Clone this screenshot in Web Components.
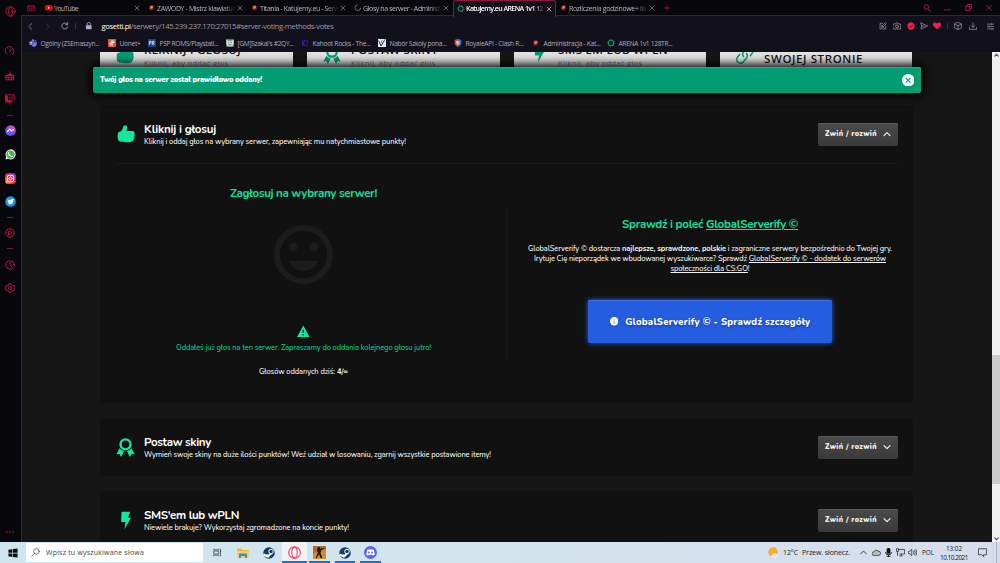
<!DOCTYPE html>
<html lang="pl"><head><meta charset="utf-8"><title>Katujemy.eu ARENA 1v1</title>
<style>html,body{margin:0;height:100%;overflow:hidden;background:#161616}</style></head>
<body><desk-screen></desk-screen>
<script>
const UI='"Open Sans","Noto Sans",sans-serif', PG='"Nunito","Lato","Open Sans",sans-serif';
const def=(n,html,extra)=>customElements.define(n,class extends HTMLElement{
  connectedCallback(){ if(this.shadowRoot)return; this.attachShadow({mode:'open'});
    this.shadowRoot.innerHTML=typeof html==='function'?html(this):html; if(extra)extra(this);} });

const S='fill="none" stroke="currentColor" stroke-linecap="round" stroke-linejoin="round" stroke-width=';
const ember='<circle cx="12" cy="12" r="9" fill="#4a1613"/><path d="M6 7q6-5 11 1l-2 7-7 3-3-4z" fill="#c9503a"/><path d="M9 9l5-1 1 3-4 2z" fill="#f0bfa6"/>';
const steam='<circle cx="12" cy="12" r="11.5" fill="#173a66"/><path d="M1 15l9 4 8-8" fill="none" stroke="#fff" stroke-width="4"/><circle cx="16" cy="9" r="4.5" fill="#173a66" stroke="#fff" stroke-width="2"/><circle cx="9" cy="17.5" r="3" fill="#fff"/>';
const I={
opera:`<circle cx="12" cy="12" r="10.3" ${S}"2"/><ellipse cx="12" cy="12" rx="4.6" ry="8.5" ${S}"2"/>`,
home:`<path d="M2 19V6l4-2 3 2h6l3-2 4 2v13zM2 9h20M8 14.5h.5M15.500 14.500h.5M7 14q5 4 10 0" ${S}"2"/>`,
yt:'<rect x="0" y="3" width="24" height="18" rx="5" fill="#f00"/><path d="M9.500 8v8l7-4z" fill="#fff"/>',
ember,steam,
ring:`<circle cx="12" cy="12" r="9" fill="none" stroke="#77757d" stroke-width="3" stroke-dasharray="42 15"/>`,
gear:`<circle cx="12" cy="12" r="8" fill="none" stroke="#0f9f77" stroke-width="3.2"/><circle cx="12" cy="12" r="10.500" fill="none" stroke="#0f9f77" stroke-width="2.500" stroke-dasharray="3 5.200"/>`,
x:`<path d="M4 4l16 16M20 4L4 20" ${S}"2.8"/>`,
plus:`<path d="M12 2v20M2 12h20" ${S}"2.6"/>`,
search:`<circle cx="10" cy="9" r="7" ${S}"2.6"/><path d="M15 15l7 7" ${S}"3"/>`,
find:`<circle cx="14.500" cy="9" r="7.300" ${S}"1.9"/><path d="M9 14.500L2 22" ${S}"1.9"/>`,
min:`<path d="M2 20h20" ${S}"2.8"/>`,
max:`<path d="M2 8h14v14H2zM7 8V2h15v15h-6" ${S}"2.8"/>`,
back:`<path d="M16 2L7 12l9 10" ${S}"2.8"/>`,fwd:`<path d="M8 2l9 10-9 10" ${S}"2.8"/>`,
reload:`<path d="M20 15a9 9 0 1 1-1-8M20 2v6h-6" ${S}"2.8"/>`,
lock:`<rect x="3" y="10" width="18" height="13" rx="2" fill="currentColor"/><path d="M7 10V6a5 5 0 0 1 10 0v4" ${S}"2.6"/>`,
edit:`<path d="M11 4H3v17h17v-8M8 16l2-5 9-9 3 3-9 9zM6 9l9 9" ${S}"2"/>`,
cam:`<path d="M1 6h6l2-3h6l2 3h6v15H1z" ${S}"2.200"/><circle cx="12" cy="13" r="4.500" ${S}"2.200"/>`,
shield:'<path d="M12 0l3 2h4l1 4 3 3-1 6-3 6-7 3-7-3-3-6-1-6 3-3 1-4h4z" fill="#fa1e4e"/><path d="M7 12l4 4 7-8" fill="none" stroke="#12101a" stroke-width="2.600"/>',
send:`<path d="M3 3l20 9L3 21l2-9zM5 12h8" ${S}"2.2"/>`,
heart:'<path d="M12 22C5 16 0 13 0 7.500 0 1 9 0 12 5c3-5 12-4 12 2.500C24 13 19 16 12 22z" fill="#fa1e4e"/>',
cube:`<path d="M12 1l10 5v12l-10 5-10-5V6zM2 6l10 5 10-5M12 11v12" ${S}"2.2"/>`,
dl:`<path d="M12 2v13M7 11l5 5 5-5M1 16v6h22v-6" ${S}"2.200"/>`,
slid:`<path d="M1 4h22M1 12h22M1 20h22M15 2v4M7 10v4M17 18v4" ${S}"2.400"/>`,
teams:'<circle cx="12" cy="5" r="4" fill="#7b83eb"/><circle cx="19.500" cy="6" r="3" fill="#5059c9"/><path d="M7 10h16v7q-2 6-8 6-6 0-8-6z" fill="#7b83eb"/><rect y="7" width="13" height="12" rx="1" fill="#4550b5"/><path d="M3 10h7M6.500 10v7" stroke="#fff" stroke-width="2"/>',
uonet:'<rect width="24" height="24" fill="#e9572c"/><path d="M12 3v18M4 13l16-3M7 19l4-6M17 5l-5 7" stroke="#fff" stroke-width="3"/>',
psp:'<rect width="24" height="24" fill="#164585"/><path d="M4 18V7h5v5H4M13 18V7h5v5h-5M16 12l3 6" fill="none" stroke="#d8e8f8" stroke-width="2.400"/>',
gm:'<rect x="1" y="1" width="22" height="22" fill="#8f9a9c"/><path d="M1 1l6 6h10l6-6v13l-4 8H5l-4-8z" fill="#d6dddc"/><path d="M6 11h4M14 11h4M8 17h8" stroke="#5c6d70" stroke-width="2.500"/>',
kahoot:'<path d="M5 3v18M14 3l-8 9 8 9M19 3l-1 11M18 18v3" fill="none" stroke="#46178f" stroke-width="3.600"/>',
nabor:'<rect width="24" height="24" fill="#e6e9ee"/><path d="M2 5l7 16L21 1" fill="none" stroke="#26384e" stroke-width="3"/><path d="M12 4l-3 10" stroke="#5f8ab5" stroke-width="3"/>',
royale:'<path d="M2 3q10-4 10-2v23Q2 20 2 12z" fill="#e0443c"/><path d="M22 3q-10-4-10-2v23q10-4 10-12z" fill="#2c6be0"/><path d="M7 6h5v12q-5-3-5-6z" fill="#f0cdb4"/><path d="M12 6h5v6q0 4-5 6z" fill="#f5ab38"/>',
dash:`<path d="M5 20A10 10 0 1 1 16 3M19.500 7A10 10 0 0 1 19 20M11 14l7-8" ${S}"2.400"/>`,
broom:`<path d="M3 11h18v10H3zM3 15h18M12 11V2M7 8h10M8 17v2M16 17v2" ${S}"2.400"/>`,
twitch:`<path d="M2 2h20v13l-4 4h-4l-4 4v-4H2z" ${S}"2.200"/><path d="M2 4h5v11h11l-4 4H3z" fill="currentColor"/><path d="M12 7v4M17 7v4" ${S}"2.200"/>`,
msgr:'<defs><linearGradient id="m" x1="0" y1="1" x2="1" y2="0"><stop stop-color="#1f7cff"/><stop offset=".5" stop-color="#8a46f5"/><stop offset="1" stop-color="#ff6a73"/></linearGradient></defs><circle cx="12" cy="12" r="11.500" fill="url(#m)"/><path d="M5 15l5-6 4 4 5-4" fill="none" stroke="#fff" stroke-width="2.600"/>',
wa:'<path d="M1 23l1.500-6A11 11 0 1 1 7 21.500z" fill="#e9f5e9"/><circle cx="12" cy="12" r="9" fill="#40b754"/><path d="M8 7q-2 4 2 7t7 2" fill="none" stroke="#fff" stroke-width="2.800"/>',
ig:'<defs><linearGradient id="g" x1="0" y1="1" x2=".8" y2="0"><stop stop-color="#ffc851"/><stop offset=".4" stop-color="#f0493f"/><stop offset=".7" stop-color="#c9328d"/><stop offset="1" stop-color="#6b4bd4"/></linearGradient></defs><rect x=".5" y=".5" width="23" height="23" rx="5" fill="url(#g)"/><rect x="5" y="5" width="14" height="14" rx="4" fill="none" stroke="#fff" stroke-width="2"/><circle cx="12" cy="12" r="3.300" fill="none" stroke="#fff" stroke-width="2"/>',
tw:'<circle cx="12" cy="12" r="11.500" fill="#1c96e0"/><path d="M6 7q3 3 6 3 0-4 4-4l4 1-2 3q0 8-8 8l-5-1q3 0 4-2-3-1-3-3z" fill="#fff"/>',
play:`<circle cx="12" cy="12" r="10" ${S}"2.400"/><path d="M9 17V8h4a3.500 3.500 0 0 1 0 7H9" ${S}"2.400"/>`,
clock:`<circle cx="12" cy="12" r="10" ${S}"2.400"/><path d="M12 6v6l4 4" ${S}"2.400"/>`,
cog:`<path d="M9.500 2h5l1 3 3 1.500 3-.5L23 10l-2 2 2 2.500-2 4-3-.5-2.500 1.500-1 3h-5l-1-3L6 18l-3 .5-2-4L3 12l-2-2 1.500-4 3 .5 3-1.500z" ${S}"2.300"/><circle cx="12" cy="12" r="3.600" ${S}"2.400"/>`,
dots:'<circle cx="4" cy="12" r="2" fill="currentColor"/><circle cx="12" cy="12" r="2" fill="currentColor"/><circle cx="20" cy="12" r="2" fill="currentColor"/>',
thumb:'<path d="M1 12q0-3 4-3.500Q8 6 8.500 1.500 12-1.500 13.500 2.500q.6 2-1 5.500H21q3.500.5 2 4 1.500 2 0 4 .5 2-1 3 0 3-4 3.500-8 1-11-.5Q2 23 1 19z" fill="currentColor"/>',
award:`<circle cx="12" cy="8" r="6.300" fill="none" stroke="currentColor" stroke-width="3"/><path d="M4.500 13L.5 20.500l4-.4L6.500 24l3.800-7.500q-4-.8-5.800-3.500zM19.500 13l4 7.500-4-.4L17.500 24l-3.800-7.500q4-.8 5.800-3.500z" fill="currentColor"/>`,
bolt:'<path d="M7 1h11l-3 7.500h4L10.500 23.500 12 14H6.500z" fill="currentColor"/>',
link:`<path d="M10 14a5 5 0 0 1 0-6l4-5a4.500 4.500 0 0 1 8 6l-3 4M14 10a5 5 0 0 1 0 6l-4 5a4.500 4.500 0 0 1-8-6l3-4" ${S}"2"/>`,
smile:'<circle cx="12" cy="12" r="10.800" fill="none" stroke="currentColor" stroke-width="2.400"/><circle cx="7.800" cy="9" r="1.800" fill="currentColor"/><circle cx="16.200" cy="9" r="1.800" fill="currentColor"/><path d="M6 14.600h12q-1.800 4-6 4t-6-4z" fill="currentColor"/>',
warn:'<path d="M12 .8L24 23H0z" fill="currentColor"/><path d="M12 9v6M12 17.500v2.500" stroke="#111" stroke-width="2.400"/>',
info:'<circle cx="12" cy="12" r="12" fill="#fff"/><path d="M12 5.500v3M9.500 11H12v6.500M9 17.500h6" fill="none" stroke="#7d9dec" stroke-width="2.200"/>',
up:`<path d="M3 17l9-9 9 9" ${S}"3.600"/>`,down:`<path d="M3 8l9 9 9-9" ${S}"3.600"/>`,
up2:`<path d="M2 17l10-10 10 10" ${S}"2.800"/>`,
close:'<circle cx="12" cy="12" r="12" fill="#fff"/><path d="M7.500 7.500l9 9M16.500 7.500l-9 9" stroke="#029c73" stroke-width="2.200"/>',
win:'<path d="M1 4l9-1.300V11.500H1zM11.500 2.500L23 1v10.500H11.500zM1 13h9v8.500L1 20zM11.500 13H23v10l-11.500-1.600z" fill="#0b0f12"/>',
task:'<path d="M2 2v3h13V2M2 22v-3h13v3M2 8h13v8H2zM20 2v20M18.500 8h4" fill="none" stroke="#333e44" stroke-width="2"/>',
folder:'<path d="M0 3h9l2 3h13v15H0z" fill="#f1b43a"/><path d="M0 8h24v13H0z" fill="#fbd168"/><path d="M4 13h16v9h-4v-4H8v4H4z" fill="#2f8fdc"/>',
operac:'<circle cx="12" cy="12" r="10.700" fill="none" stroke="#ef3f64" stroke-width="2"/><ellipse cx="12" cy="12" rx="5" ry="9.500" fill="#fff" stroke="#ef3f64" stroke-width="2"/>',
cs:'<rect width="24" height="24" fill="#d18d2c"/><path d="M0 14l24-9V0H0z" fill="#b3711f"/><path d="M9 2h4v3l8-2v2l-6 3-1 5 3 9h-3l-3-7-4 7H5l4-10-2-4z" fill="#1c1c1a"/>',
discord:'<circle cx="12" cy="12" r="12" fill="#5865f2"/><path d="M6 7q6-2 12 0l2 9q-3 2-4 1l-1-1H9l-1 1q-1 1-4-1z" fill="#fff"/><circle cx="9" cy="12" r="1.700" fill="#5865f2"/><circle cx="15" cy="12" r="1.700" fill="#5865f2"/>',
wx:'<circle cx="11" cy="11" r="10.500" fill="#f8ac28"/><path d="M11 23a4 4 0 0 1 0-8q5-4 8 1a3.500 3.500 0 0 1 1 7z" fill="#e9edf2"/>',
cloud:'<path d="M5 20a5 5 0 0 1 0-10Q9 2 17 8q6 1 6 6t-5 6z" fill="#b5b9bd" stroke="#333" stroke-width="2"/>',
mic:'<rect x="7" y="0" width="10" height="15" rx="4" fill="#111"/><path d="M4 11q0 7 8 7t8-7M12 18v6M7 22h10" fill="none" stroke="#111" stroke-width="2.500"/>',
mon:'<path d="M6 4h17v12H9M14 16v5M9 21h9M1 2h6v7H1zM4 9v12" fill="none" stroke="#222" stroke-width="2"/>',
vol:'<path d="M1 9h4l5-6v18l-5-6H1zM14 8q3 4 0 8M17 5q5 7 0 14M20.500 3q6 9 0 18" fill="none" stroke="#222" stroke-width="1.800"/>',
note:'<path d="M1 2h22v16h-8v5l-5-5H1z" fill="none" stroke="#222" stroke-width="2"/>',
tri:'<path d="M5 15l7-7 7 7" fill="none" stroke="#555" stroke-width="4"/>',trid:'<path d="M5 9l7 7 7-7" fill="none" stroke="#555" stroke-width="4"/>'
};
def('x-icon',h=>`<style>:host{display:block;flex:none;width:${h.getAttribute('s')||9}px;height:${h.getAttribute('s')||9}px}svg{display:block;width:100%;height:100%}</style><svg viewBox="0 0 24 24">${I[h.getAttribute('n')]}</svg>`);

/* Text run spaced out to fill the width given in "w". */
def('fit-text','<style>:host{display:inline-block;white-space:nowrap;flex:none;justify-self:start}</style><slot></slot>',h=>{
  const w=+h.getAttribute('w'),n=h.textContent.length,m=h.getBoundingClientRect().width;
  if(m&&w){h.style.letterSpacing=((w-m)/n)+'px';}
});

def('browser-tab',h=>`<style>
:host{display:flex;align-items:center;box-sizing:border-box;width:103px;height:16px;padding:0 4px 0 4px;gap:1.5px;font:7px ${UI};color:#b9b6bf;flex:none}
:host([active]){background:#12101a;border:1px solid #8f1838;border-bottom:0;border-radius:3px 3px 0 0;padding:0 3px 1px;color:#fff;font-weight:600;height:17px;align-self:flex-start}
.t{flex:1;min-width:0;overflow:hidden;display:flex;-webkit-mask:linear-gradient(90deg,#000 84%,transparent)}
:host([full]) .t{-webkit-mask:none}x-icon.c{color:#8f8b98}:host([active]) .c{color:#ddd}</style>
<x-icon n="${h.getAttribute('icon')}" s="7.5"></x-icon><div class="t"><fit-text w="${h.getAttribute('w')}">${h.getAttribute('label')}</fit-text></div><x-icon class="c" n="x" s="6"></x-icon>`);

def('tab-strip',`<style>:host{display:flex;align-items:center;height:16px;background:#08070c;box-sizing:border-box;box-shadow:inset 0 -1px #5c1330;color:#c2183f}
.h{width:20px;display:flex;justify-content:center;box-sizing:border-box;padding-right:1px}.p{margin-left:5px}.e{flex:1}.r{display:grid;grid-template-columns:20px 21px 21px 20px;justify-items:center;padding-right:1px}</style>
<div class="h"><x-icon n="home" s="8"></x-icon></div>
<browser-tab full icon="yt" label="YouTube" w="24"></browser-tab>
<browser-tab icon="ember" label="ZAWODY - Mistrz klawiatur" w="78"></browser-tab>
<browser-tab icon="ember" label="Titania - Katujemy.eu - Serw" w="79"></browser-tab>
<browser-tab icon="ring" label="Głosy na serwer - Administr" w="79"></browser-tab>
<browser-tab active icon="gear" label="Katujemy.eu ARENA 1v1 12" w="77"></browser-tab>
<browser-tab icon="ember" label="Rozliczenia godzinowe+ lis" w="77"></browser-tab>
<x-icon class="p" n="plus" s="6"></x-icon><div class="e"></div>
<div class="r"><x-icon n="search" s="8"></x-icon><x-icon n="min" s="7"></x-icon><x-icon n="max" s="7"></x-icon><x-icon n="x" s="7.5"></x-icon></div>`);

def('address-bar',`<style>:host{display:flex;align-items:center;height:20px;background:#12101a;color:#9c98a6;font:7.7px ${UI};box-sizing:border-box}
.l{display:grid;grid-template-columns:18px 17px 17px 5px 20.500px;justify-items:center;align-items:center}.d{color:#3c3947}.s{width:1px;height:6px;background:#34313d}
.u{margin-left:3px}b{font-weight:400;color:#fff}.e{flex:1}.r{display:grid;grid-template-columns:14px 14px 14px 13px 13.500px 7px 13px 18px 17px 1px;justify-items:center;align-items:center}</style>
<div class="l"><x-icon n="back" s="7"></x-icon><x-icon class="d" n="fwd" s="7"></x-icon><x-icon n="reload" s="8"></x-icon><span class="s"></span><x-icon n="lock" s="7.5" style="color:#b9a8cf"></x-icon></div>
<fit-text class="u" w="232"><b>gosetti.pl</b>/serwery/145.239.237.170:27015#server-voting-methods-votes</fit-text><div class="e"></div>
<div class="r"><x-icon n="edit" s="8"></x-icon><x-icon n="cam" s="8"></x-icon><x-icon n="shield" s="8"></x-icon><x-icon n="send" s="8"></x-icon><x-icon n="heart" s="8"></x-icon><span class="s"></span><x-icon n="cube" s="8"></x-icon><x-icon n="dl" s="8"></x-icon><x-icon n="slid" s="7"></x-icon></div>`);

const marks=[['teams','Ogólny (ZSEmaszyn...',59],['uonet','Uonet+',21],['psp','PSP ROMS/Playstati...',59],['gm','[GM]Szakal\'s #2QY...',56],['kahoot','Kahoot Rocks - The...',58],['nabor','Nabór Szkoły pona...',57],['royale','RoyaleAPI - Clash R...',58],['ember','Administracja - Kat...',57],['gear','ARENA 1v1 128TR...',54]];
def('bookmark-bar',`<style>:host{display:grid;grid-template-columns:79px 40px 78px 75px 77px 76px 78px 75px 80px;height:16px;padding:0 0 2px 7.500px;box-sizing:border-box;align-items:center;background:#12101a;color:#b0abc0;font:6.6px ${UI}}div{display:flex;align-items:center;gap:4px}</style>
${marks.map(m=>`<div><x-icon n="${m[0]}" s="8"></x-icon><fit-text w="${m[2]}">${m[1]}</fit-text></div>`).join('')}`);

const side=[['opera',11,11],['dash',51,10],['broom',75.5,10],['twitch',99,10],['-',115],['msgr',130.5,11],['wa',154.5,11],['ig',178,11],['tw',201,11],['-',217],['play',232.5,10],['-',248.5],['clock',264.5,10],['cog',288,10]];
let pos=0;
def('gx-sidebar',`<style>:host{display:flex;flex-direction:column;align-items:center;width:21px;box-sizing:border-box;background:#08070c;padding-right:1px;color:#c2183f;height:542px;padding-bottom:5px}
x-icon{display:block}i{width:6px;height:1px;background:#7a1936}.e{flex:1}</style>
${side.map(r=>{const s=r[2]||1,t=r[1]-s/2,g=t-pos;pos=t+s;return r[0]=='-'?`<i style="margin-top:${g}px"></i>`:`<x-icon n="${r[0]}" s="${s}" style="margin-top:${g}px"></x-icon>`}).join('')}<div class="e"></div><x-icon n="dots" s="10"></x-icon>`);

def('method-card',h=>`<style>:host{display:block;height:15px;background:#e2e2e2;overflow:hidden;color:#151515;box-sizing:border-box}
.w{display:flex;gap:10px;padding-left:16px;align-items:flex-end;height:15px}x-icon{color:#029c73;margin-bottom:${h.getAttribute('ib')||3}px}
.t{display:flex;flex-direction:column;justify-content:flex-end;align-items:flex-start}.a{font:600 11.5px/14px ${UI};margin-bottom:${h.hasAttribute('last')?1:2}px}.b{font:7.6px/8px ${UI};color:#777}</style>
<div class="w"><x-icon n="${h.getAttribute('icon')}" s="18"></x-icon><div class="t"><fit-text class="a" w="${h.getAttribute('w')}">${h.getAttribute('title')}</fit-text>${h.hasAttribute('last')?'':'<fit-text class="b" w="84.5">Kliknij, aby oddać głos</fit-text>'}</div></div>`);

def('toast-bar',`<style>:host{position:relative;display:flex;align-items:center;justify-content:space-between;height:26px;margin:0 -7px;padding:0 7px;box-sizing:border-box;width:828px;background:#029c73;border-radius:2px;box-shadow:0 0 10px 3px #000,inset 0 1px #1fa984;color:#fff;font:900 7.4px ${PG}}</style><fit-text w="162">Twój głos na serwer został prawidłowo oddany!</fit-text><x-icon n="close" s="12.5"></x-icon>`);

def('toggle-button',h=>`<style>:host{display:flex;align-items:center;justify-content:space-between;box-sizing:border-box;width:80px;height:23px;padding:0 7px;border-radius:2px;background:linear-gradient(#4a4a4a,#3a3a3a);box-shadow:inset 0 1px #5a5a5a;color:#f1f1f1;font:900 7.2px ${PG};flex:none}</style><fit-text w="52">Zwiń / rozwiń</fit-text><x-icon n="${h.getAttribute('dir')}" s="8"></x-icon>`);

def('vote-panel',h=>`<style>:host{display:block;background:#111;border-radius:4px;box-sizing:border-box;padding:0 15px;width:813px}
header{display:flex;align-items:center;height:58px}.i{width:21px;display:flex;justify-content:center;color:#10e8a0;margin-right:8px}.t{flex:1;display:flex;flex-direction:column;align-items:flex-start}
.a{font:700 11.6px/14px ${PG};color:#fff}.b{font:500 7.5px/10px ${PG};color:#f2f2f2;margin-top:1px}</style>
<header><div class="i"><x-icon n="${h.getAttribute('icon')}" s="${h.getAttribute('is')||18}"></x-icon></div><div class="t"><fit-text class="a" w="${h.getAttribute('tw')}">${h.getAttribute('label')}</fit-text><fit-text class="b" w="${h.getAttribute('sw')}">${h.getAttribute('sub')}</fit-text></div><toggle-button dir="${h.getAttribute('dir')}"></toggle-button></header><slot></slot>`);

def('vote-status',`<style>:host{display:flex;flex-direction:column;align-items:center;width:377px;color:#10e09a;font:500 7.5px/10px ${PG}}
.h{font:700 11.6px/14px ${PG};margin-top:22px}.s{color:#1c1c1c;margin-top:25px}.w{margin-top:41px;color:#10e8a0}.m{margin-top:5px;color:#0fcb88}.v{margin-top:14.5px;color:#f2f2f2}</style>
<fit-text class="h" w="147">Zagłosuj na wybrany serwer!</fit-text><x-icon class="s" n="smile" s="59"></x-icon><x-icon class="w" n="warn" s="12.5"></x-icon>
<fit-text class="m" w="255">Oddałeś już głos na ten serwer. Zapraszamy do oddania kolejnego głosu jutro!</fit-text><fit-text class="v" w="89">Głosów oddanych dziś: <b>4/∞</b></fit-text>`);

def('verify-promo',`<style>:host{display:flex;flex-direction:column;align-items:center;width:377px;color:#f2f2f2;font:500 7.5px/10px ${PG}}
.h{font:700 11.6px/14px ${PG};color:#10e09a;margin:53px 0 13px}u{text-underline-offset:1px}
.b{margin-top:26px;width:244px;height:43px;border-radius:2px;background:#245de0;box-shadow:0 0 5px #2a62e6,inset 0 1px #3f72ea;display:flex;align-items:center;justify-content:center;gap:7px;color:#fff;font:800 9.6px ${PG};text-shadow:0 1px 3px #0006}</style>
<fit-text class="h" w="176">Sprawdź i poleć <u>GlobalServerify ©</u></fit-text>
<fit-text w="364">GlobalServerify © dostarcza <b>najlepsze, sprawdzone, polskie</b> i zagraniczne serwery bezpośrednio do Twojej gry.</fit-text>
<fit-text w="352">Irytuje Cię nieporządek we wbudowanej wyszukiwarce? Sprawdź <u>GlobalServerify © - dodatek do serwerów</u></fit-text>
<fit-text w="79"><u>społeczności dla CS:GO</u>!</fit-text>
<div class="b"><x-icon n="info" s="8.5"></x-icon><fit-text w="185">GlobalServerify © - Sprawdź szczegóły</fit-text></div>`);

def('page-view',`<style>:host{display:block;height:490px;overflow:hidden;background:#161616;padding-left:79px;box-sizing:border-box;width:971px}
.c{display:grid;grid-template-columns:193px 193px 192px 192px;column-gap:14px;width:813px}.p1{margin-top:12px;height:298px;padding-top:0}.p2{margin-top:15px}.p3{margin-top:15px;height:70px}
.sp{display:grid;grid-template-columns:377px 29.500px 377px;border-top:1px solid #1a1a1a;height:235px;align-items:start}.v{width:1px;height:150px;background:#191919;margin:45px 0 0 14px}</style>
<div class="c"><method-card icon="thumb" title="KLIKNIJ I GŁOSUJ" w="97"></method-card><method-card icon="award" title="POSTAW SKINY" w="87"></method-card><method-card icon="bolt" title="SMS'EM LUB WPLN" w="110" ib="4"></method-card><method-card icon="link" title="SWOJEJ STRONIE" w="99" last></method-card></div>
<toast-bar></toast-bar>
<vote-panel class="p1" icon="thumb" label="Kliknij i głosuj" tw="72" sub="Kliknij i oddaj głos na wybrany serwer, zapewniając mu natychmiastowe punkty!" sw="262" dir="up"><div class="sp"><vote-status></vote-status><div class="v"></div><verify-promo></verify-promo></div></vote-panel>
<vote-panel class="p2" icon="award" is="19" label="Postaw skiny" tw="67" sub="Wymień swoje skiny na duże ilości punktów! Weź udział w losowaniu, zgarnij wszystkie postawione itemy!" sw="347" dir="down"></vote-panel>
<vote-panel class="p3" icon="bolt" is="19" label="SMS'em lub wPLN" tw="95" sub="Niewiele brakuje? Wykorzystaj zgromadzone na koncie punkty!" sw="205" dir="down"></vote-panel>`);

def('scroll-bar',`<style>:host{display:flex;flex-direction:column;align-items:center;width:8px;height:490px;background:#f0f0f0}.b{width:8px;height:129px;background:#cdcdcd;margin-top:296px}</style><x-icon n="tri" s="7"></x-icon><div class="b"></div><x-icon n="trid" s="7" style="margin-top:auto"></x-icon>`);
def('task-app',h=>`<style>:host{display:flex;align-items:center;justify-content:center;height:21px;box-sizing:border-box}:host([run]){box-shadow:inset 0 -2px #0a78d4}:host([on]){background:#eef4f8}</style><x-icon n="${h.getAttribute('n')}" s="${h.getAttribute('s')||12}"></x-icon>`);
def('task-bar',`<style>:host{display:flex;align-items:center;height:21px;background:linear-gradient(90deg,#cfe6ee,#d3e4ee 50%,#d6dcec);color:#1d2226;font:7px ${UI}}
.w{width:26px;display:flex;justify-content:center}.q{display:flex;align-items:center;gap:6px;width:177px;height:19px;background:#fff;padding-left:5px;box-sizing:border-box;color:#444}
.a{display:grid;grid-template-columns:26px 26px 26px;margin-left:1px}.b{display:grid;grid-template-columns:25px 2px 21px 5px 20px 5px 21px}
.e{flex:1}.r{display:grid;grid-template-columns:12px 19px 54px 14px 12px 12px 13px 15px 18px 28px 28px 4px;align-items:center}.r x-icon{justify-self:center}.r .f{justify-self:start;margin-left:-3px}.r .vo{justify-self:start;margin-left:1px}.d{display:flex;flex-direction:column;align-items:center;font-size:6.4px;line-height:9px}.k{width:1px;height:21px;background:#aeb8c4}</style>
<div class="w"><x-icon n="win" s="10"></x-icon></div><div class="q"><x-icon n="find" s="9"></x-icon><fit-text w="98">Wpisz tu wyszukiwane słowa</fit-text></div>
<div class="a"><task-app n="task" s="9"></task-app><task-app n="folder"></task-app><task-app n="steam"></task-app></div>
<div class="b"><task-app n="operac" s="13" run on></task-app><i></i><task-app n="cs" run s="13"></task-app><i></i><task-app n="steam" run></task-app><i></i><task-app n="discord" run s="13"></task-app></div><div class="e"></div>
<div class="r"><x-icon class="f" n="wx" s="11"></x-icon><fit-text w="15">12°C</fit-text><fit-text w="48">Przew. słonecz.</fit-text><x-icon n="up2" s="7"></x-icon><x-icon n="cloud" s="9"></x-icon><x-icon n="mic" s="9"></x-icon><x-icon n="mon" s="9"></x-icon><x-icon class="vo" n="vol" s="9"></x-icon><fit-text w="12" style="font-size:6.400px">POL</fit-text><div class="d"><fit-text w="16">13:02</fit-text><fit-text w="28">10.10.2021</fit-text></div><x-icon n="note" s="9"></x-icon><span class="k"></span></div>`);
def('desk-screen',`<style>:host{display:block;width:1000px;height:563px;overflow:hidden}.m{display:grid;grid-template-columns:21px 979px;height:542px}.v{display:flex}.n{background:#12101a}page-view,address-bar,bookmark-bar{box-shadow:inset 1px 0 #5c1330}</style>
<div class="m"><gx-sidebar></gx-sidebar><div class="n"><tab-strip></tab-strip><address-bar></address-bar><bookmark-bar></bookmark-bar><div class="v"><page-view></page-view><scroll-bar></scroll-bar></div></div></div><task-bar></task-bar>`);
</script></body></html>
